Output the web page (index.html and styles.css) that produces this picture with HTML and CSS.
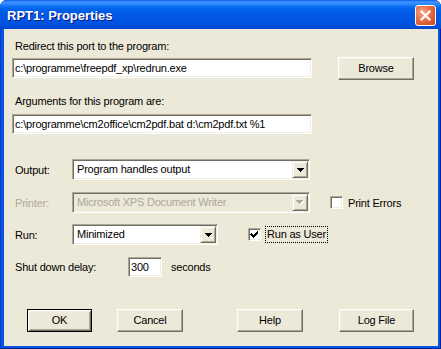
FILE: index.html
```
<!DOCTYPE html>
<html>
<head>
<meta charset="utf-8">
<link rel="stylesheet" href="styles.css">
</head>
<body>
<div class="window">
  <div class="titlebar">
    <span class="title">RPT1: Properties</span>
    <span class="close"><svg width="13" height="13" viewBox="0 0 13 13"><path d="M2.5 2.5 L10.5 10.5 M10.5 2.5 L2.5 10.5" stroke="#fff" stroke-width="2.2" stroke-linecap="square"/></svg></span>
  </div>
  <div class="client">
    <div class="label">Redirect this port to the program:</div>
    <div class="row-path">
      <div class="edit edit-wide">c:\programme\freepdf_xp\redrun.exe</div>
      <div class="btn btn-browse">Browse</div>
    </div>
    <div class="label label-args">Arguments for this program are:</div>
    <div class="edit edit-wide edit-args">c:\programme\cm2office\cm2pdf.bat d:\cm2pdf.txt %1</div>

    <div class="field-row row-output">
      <span class="field-label">Output:</span>
      <div class="combo combo-wide">
        <span class="combo-text">Program handles output</span>
        <span class="drop"><svg width="7" height="4" viewBox="0 0 7 4" shape-rendering="crispEdges"><path d="M0 0h7v1h-1v1h-1v1h-1v1h-1v-1h-1v-1h-1v-1h-1z" fill="#000"/></svg></span>
      </div>
    </div>

    <div class="field-row row-printer">
      <span class="field-label disabled">Printer:</span>
      <div class="combo combo-wide combo-disabled">
        <span class="combo-text">Microsoft XPS Document Writer</span>
        <span class="drop"><svg width="8" height="5" viewBox="0 0 8 5" shape-rendering="crispEdges"><path d="M1 1h7v1h-1v1h-1v1h-1v1h-1v-1h-1v-1h-1v-1h-1z" fill="#fff"/><path d="M0 0h7v1h-1v1h-1v1h-1v1h-1v-1h-1v-1h-1v-1h-1z" fill="#ACA899"/></svg></span>
      </div>
      <span class="check check-print"><span class="box"></span><span class="check-label">Print Errors</span></span>
    </div>

    <div class="field-row row-run">
      <span class="field-label">Run:</span>
      <div class="combo combo-run">
        <span class="combo-text">Minimized</span>
        <span class="drop"><svg width="7" height="4" viewBox="0 0 7 4" shape-rendering="crispEdges"><path d="M0 0h7v1h-1v1h-1v1h-1v1h-1v-1h-1v-1h-1v-1h-1z" fill="#000"/></svg></span>
      </div>
      <span class="check check-run"><span class="box"><svg width="11" height="11" viewBox="0 0 11 11" shape-rendering="crispEdges"><path d="M2 4h1v1h1v1h1v-1h1v-1h1v-1h1v-1h1v3h-1v1h-1v1h-1v1h-1v1h-1v-1h-1v-1h-1v-1h-1z" fill="#000"/></svg></span><span class="check-label focus">Run as User</span></span>
    </div>

    <div class="field-row row-delay">
      <span class="delay-label">Shut down delay:</span>
      <div class="edit edit-delay">300</div>
      <span class="unit">seconds</span>
    </div>

    <div class="buttons">
      <div class="btn btn-default btn-ok">OK</div>
      <div class="btn btn-cancel">Cancel</div>
      <div class="btn btn-help">Help</div>
      <div class="btn btn-log">Log File</div>
    </div>
  </div>
</div>
</body>
</html>
```
FILE: styles.css
```
html, body {
  margin: 0;
  padding: 0;
  background: #ffffff;
}

.window {
  width: 441px;
  height: 349px;
  display: flex;
  flex-direction: column;
  background: #0553E2;
  border-radius: 7px 7px 0 0;
  overflow: hidden;
  box-shadow: inset 1px 0 #0A3ACC, inset -1px 0 #00209E, inset 0 -1px #00209E;
  font-family: "Liberation Sans", Arial, sans-serif;
  font-size: 11px;
  letter-spacing: -0.2px;
  color: #000;
}

.titlebar {
  flex: none;
  height: 29px;
  box-sizing: border-box;
  display: flex;
  align-items: flex-start;
  padding: 0 5px 0 7px;
  background: linear-gradient(#0A5BE8 0, #3F94FF 2px, #2E89FC 4px, #1173F5 6px, #0063EC 9px, #005AE6 13px, #0056E3 19px, #0053E0 23px, #004FDA 26px, #0046CC 29px);
}

.title {
  flex: 1;
  margin-top: 8px;
  line-height: 16px;
  color: #fff;
  font-weight: bold;
  font-size: 13px;
  letter-spacing: 0;
  text-shadow: 1px 1px #0A1883;
}

.close {
  margin-top: 5px;
  width: 21px;
  height: 21px;
  box-sizing: border-box;
  border: 1px solid #fff;
  border-radius: 3px;
  background: radial-gradient(circle at 35% 35%, #F7A88C 0%, #E5683F 50%, #C9451C 100%);
  display: flex;
  align-items: center;
  justify-content: center;
}

.client {
  flex: 1;
  margin: 0 3px 3px 4px;
  background: #ECE9D8;
  padding: 11px 0 0 8px;
  display: flex;
  flex-direction: column;
  align-items: flex-start;
}

.label {
  line-height: 13px;
  padding-left: 3px;
}

.label-args {
  margin-top: 15px;
}

.row-path {
  display: flex;
  align-items: flex-start;
  height: 23px;
  margin-top: 4px;
}

.row-path .edit {
  margin-top: 1px;
}

.edit {
  box-sizing: border-box;
  height: 20px;
  background: #fff;
  border: 1px solid;
  border-color: #ACA899 #fff #fff #ACA899;
  box-shadow: inset 1px 1px #716F64, inset -1px -1px #F1EFE2;
  padding: 0 2px;
  line-height: 18px;
  white-space: nowrap;
  overflow: hidden;
}

.edit-wide {
  width: 300px;
}

.edit-args {
  margin-top: 6px;
}

.btn {
  box-sizing: border-box;
  height: 23px;
  border: 1px solid;
  border-color: #fff #716F64 #716F64 #fff;
  box-shadow: inset -1px -1px #ACA899, inset 1px 1px #F1EFE2;
  background: #ECE9D8;
  display: flex;
  align-items: center;
  justify-content: center;
  line-height: 13px;
}

.btn-default {
  border: 1px solid #000;
  box-shadow: inset 1px 1px #fff, inset -1px -1px #716F64, inset 2px 2px #F1EFE2, inset -2px -2px #ACA899;
}

.btn-browse {
  margin-left: 26px;
  width: 76px;
}

.field-row {
  display: flex;
  align-items: center;
  height: 21px;
}

.row-output {
  margin-top: 25px;
}

.row-printer {
  margin-top: 12px;
}

.row-run {
  margin-top: 11px;
}

.row-delay {
  margin-top: 12px;
  height: 20px;
}

.field-label {
  width: 60px;
  box-sizing: border-box;
  padding-left: 3px;
}

.disabled {
  color: #ACA899;
}

.combo {
  box-sizing: border-box;
  height: 21px;
  border: 1px solid;
  border-color: #ACA899 #fff #fff #ACA899;
  box-shadow: inset 1px 1px #716F64, inset -1px -1px #F1EFE2;
  background: #fff;
  padding: 1px;
  display: flex;
}

.combo-wide {
  width: 238px;
}

.combo-run {
  width: 146px;
}

.combo-text {
  flex: 1;
  padding-left: 3px;
  line-height: 17px;
  white-space: nowrap;
  overflow: hidden;
}

.combo-disabled {
  background: #ECE9D8;
  color: #ACA899;
}

.drop {
  width: 16px;
  height: 17px;
  box-sizing: border-box;
  border: 1px solid;
  border-color: #F1EFE2 #716F64 #716F64 #F1EFE2;
  box-shadow: inset 1px 1px #fff, inset -1px -1px #ACA899;
  background: #ECE9D8;
  display: flex;
  align-items: center;
  justify-content: center;
}

.drop svg {
  display: block;
}

.check {
  display: flex;
  align-items: center;
}

.check-print {
  margin-left: 20px;
}

.check-run {
  margin-left: 30px;
}

.box {
  width: 13px;
  height: 13px;
  box-sizing: border-box;
  border: 1px solid;
  border-color: #ACA899 #fff #fff #ACA899;
  box-shadow: inset 1px 1px #716F64, inset -1px -1px #F1EFE2;
  background: #fff;
}

.box svg {
  display: block;
}

.check-print .check-label {
  margin-left: 5px;
}

.focus {
  margin-left: 4px;
  border: 1px dotted #000;
  padding: 0 1px;
  line-height: 15px;
}

.delay-label {
  width: 116px;
  box-sizing: border-box;
  padding-left: 3px;
}

.edit-delay {
  width: 34px;
}

.unit {
  margin-left: 9px;
}

.buttons {
  display: flex;
  margin-top: 32px;
}

.btn-ok {
  margin-left: 15px;
  width: 65px;
}

.btn-cancel {
  margin-left: 25px;
  width: 66px;
}

.btn-help {
  margin-left: 54px;
  width: 66px;
}

.btn-log {
  margin-left: 36px;
  width: 75px;
}
```
